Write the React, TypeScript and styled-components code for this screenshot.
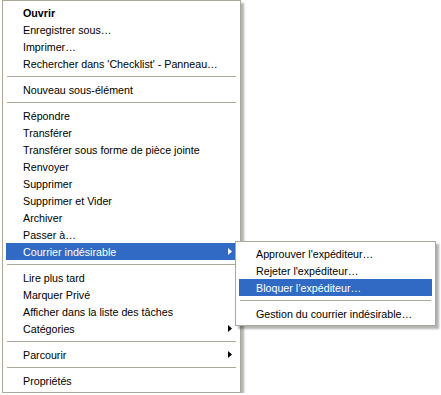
import styled, { createGlobalStyle } from "styled-components";

const GlobalStyle = createGlobalStyle`
  html, body {
    margin : 0;
    padding : 0;
    background : #ffffff;
  }
  body {
    font-family : "Liberation Sans", Arial, sans-serif;
    font-size : 10.7px;
    color : #000000;
  }
`

type Entry =
  | { kind : "sep" }
  | { kind : "item"; label : string; bold? : boolean; sub? : boolean; active? : boolean };

const mainEntries : Entry[] = [
  { kind : "item", label : "Ouvrir", bold : true },
  { kind : "item", label : "Enregistrer sous…" },
  { kind : "item", label : "Imprimer…" },
  { kind : "item", label : "Rechercher dans 'Checklist' - Panneau…" },
  { kind : "sep" },
  { kind : "item", label : "Nouveau sous-élément" },
  { kind : "sep" },
  { kind : "item", label : "Répondre" },
  { kind : "item", label : "Transférer" },
  { kind : "item", label : "Transférer sous forme de pièce jointe" },
  { kind : "item", label : "Renvoyer" },
  { kind : "item", label : "Supprimer" },
  { kind : "item", label : "Supprimer et Vider" },
  { kind : "item", label : "Archiver" },
  { kind : "item", label : "Passer à…" },
  { kind : "item", label : "Courrier indésirable", sub : true, active : true },
  { kind : "sep" },
  { kind : "item", label : "Lire plus tard" },
  { kind : "item", label : "Marquer Privé" },
  { kind : "item", label : "Afficher dans la liste des tâches" },
  { kind : "item", label : "Catégories", sub : true },
  { kind : "sep" },
  { kind : "item", label : "Parcourir", sub : true },
  { kind : "sep" },
  { kind : "item", label : "Propriétés" },
];

const junkEntries : Entry[] = [
  { kind : "item", label : "Approuver l'expéditeur…" },
  { kind : "item", label : "Rejeter l'expéditeur…" },
  { kind : "item", label : "Bloquer l’expéditeur…", active : true },
  { kind : "sep" },
  { kind : "item", label : "Gestion du courrier indésirable…" },
];

const SubArrow = ({ active } : { active? : boolean }) => (
  <StArrow width="4" height="7" viewBox="0 0 4 7">
    <polygon points="0,0 4,3.5 0,7" fill={active ? "#ffffff" : "#000000"} />
  </StArrow>
);

const renderEntries = (entries : Entry[]) =>
  entries.map((e, i) =>
    e.kind === "sep" ? (
      <StSeparator key={i} />
    ) : (
      <StItem key={i} $active={e.active} $bold={e.bold}>
        {e.label}
        {e.sub ? <SubArrow active={e.active} /> : null}
        {e.sub && e.active ? (
          <StSubMenu>{renderEntries(junkEntries)}</StSubMenu>
        ) : null}
      </StItem>
    )
  );

const App = () => {
  return (
    <>
      <GlobalStyle />
      <StMenu>{renderEntries(mainEntries)}</StMenu>
    </>
  );
};

export default App;

const StMenu = styled.div`
  width : 239px;
  margin-left : 2px;
  box-sizing : border-box;
  background-color : #ffffff;
  border : 1px solid #aca899;
  padding : 3px;
  display : flex;
  flex-direction : column;
  box-shadow : 3px 3px 2px rgba(0, 0, 0, 0.3);
`

const StSubMenu = styled(StMenu)`
  position : absolute;
  top : -2px;
  left : 229px;
  width : 201px;
  margin-left : 0;
  z-index : 2;
  color : #000000;
  font-weight : 400;
`

const StItem = styled.div<{ $active? : boolean; $bold? : boolean }>`
  position : relative;
  height : 17px;
  display : flex;
  align-items : center;
  padding-left : 17px;
  padding-right : 5px;
  white-space : nowrap;
  font-weight : ${(p) => (p.$bold ? 700 : 400)};
  background-color : ${(p) => (p.$active ? "#316ac5" : "transparent")};
  color : ${(p) => (p.$active ? "#ffffff" : "#000000")};
`

const StArrow = styled.svg`
  margin-left : auto;
  flex-shrink : 0;
`

const StSeparator = styled.div`
  height : 9px;
  display : flex;
  align-items : center;
  &::after {
    content : "";
    flex : 1;
    height : 1px;
    margin : 0 1px;
    background-color : #aca899;
  }
`
